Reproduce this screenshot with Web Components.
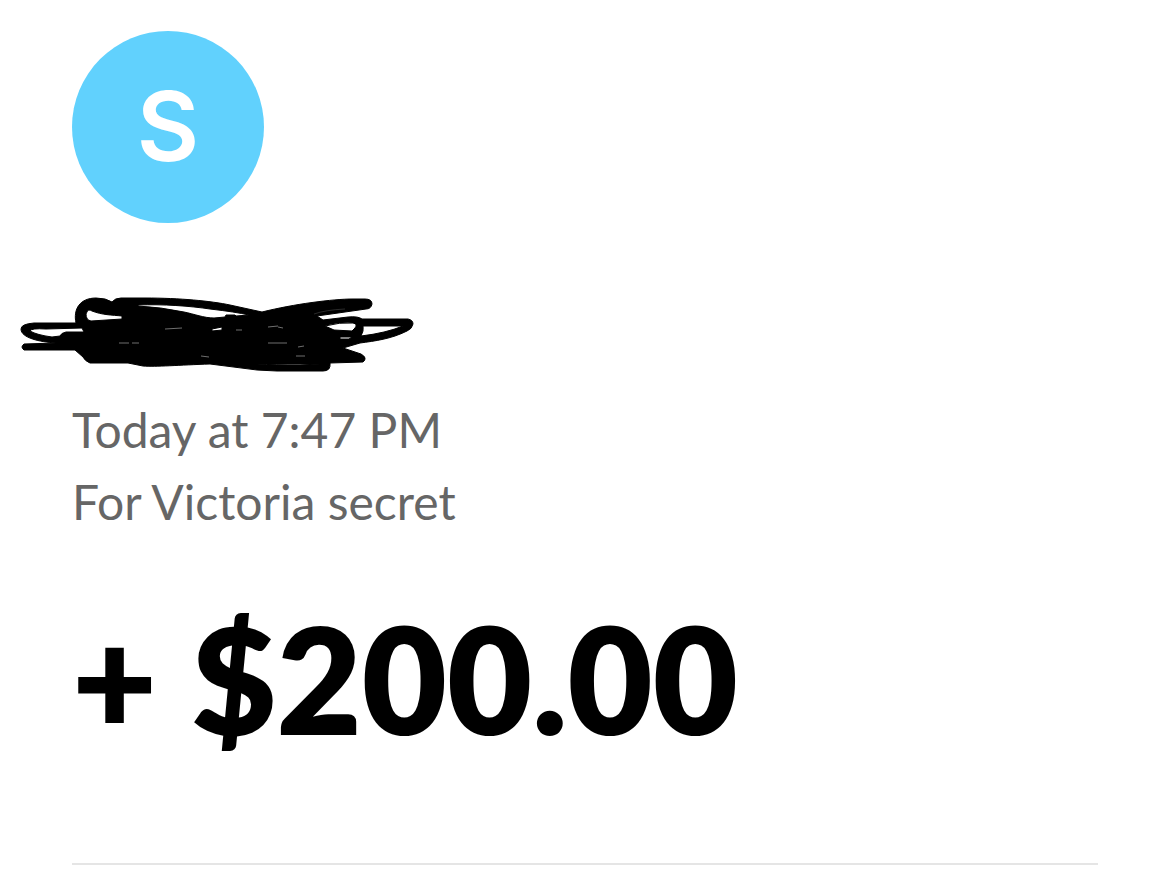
<!DOCTYPE html>
<html lang="en">
<head>
<meta charset="utf-8">
<meta name="viewport" content="width=device-width, initial-scale=1">
<title>Payment</title>
<style>
    body {
        margin: 0;
        background: #fff;
        color: #000;
        font-family: Lato, "Liberation Sans", Arial, sans-serif;
    }
</style>
</head>
<body>
<payment-receipt>
    <user-avatar slot="avatar">S</user-avatar>
    <hidden-name slot="name"></hidden-name>
    <span slot="time">Today at 7:47 PM</span>
    <span slot="note">For Victoria secret</span>
    <payment-amount slot="amount">+ $200.00</payment-amount>
</payment-receipt>

<script>
(function () {
    function define(name, html) {
        const tmpl = document.createElement('template');
        tmpl.innerHTML = html;

        customElements.define(name, class extends HTMLElement {
            constructor() {
                super();
                this.attachShadow({mode: 'open'});
                this.shadowRoot.appendChild(tmpl.content.cloneNode(true));
            }
        });
    }

    define('user-avatar', `
        <style>
            :host {
                display: flex;
                align-items: center;
                justify-content: center;
                box-sizing: border-box;
                width: 192px;
                height: 192px;
                padding-bottom: 2px;
                border-radius: 50%;
                background: #61d1fd;
                color: #fff;
                font: 600 96px/1 Inter, sans-serif;
            }
        </style>
        <slot></slot>
    `);

    // pen marks drawn over the sender's name
    define('hidden-name', `
        <style>
            :host {
                display: block;
                margin-left: -52px;
            }
            svg {
                display: block;
                width: 396px;
                height: 80px;
            }
        </style>
        <svg viewBox="20 295 396 80" aria-hidden="true">
            <path fill-rule="evenodd" stroke="#000" stroke-width="1" stroke-linejoin="round" d="
                M76 323 C73 309 80 298 96 298 Q106 298 112 302 Q115 298 121 298
                L145 298 C180 298 211 301 230 305 L262 312
                C294 304 333 299 353 299 L365 299 Q372 299 372 304 Q371 309 366 309
                L317 316 L323 320 L348 317 Q358 316 362 319 L408 319
                Q413 320 413 324 Q412 329 407 331 C391 339 375 341 360 343 L343 348
                L361 354 Q368 358 363 362 L330 363 Q331 371 323 371 L277 371
                L257 370 L210 364 C180 365 155 367 143 366 L128 363 L90 363
                Q85 361 83 357 L75 350 L24 350 Q20 347 24 344
                L56 343 C40 342 21 338 21 329 Q21 324 34 323 Z
                M30 331 Q31 328 46 329 L82 328 L84 332 L66 332 Q61 333 60 336
                L52 337 Q37 335 30 331 Z
                M86 314 Q88 308 92 311 C102 315 112 315 122 316 L122 319 L91 321 Q86 320 86 314 Z
                M138 305 C163 304 190 306 210 309 Q236 312 249 315 L236 316 L235 315 L226 315 L225 317
                L214 318 C204 318 194 314 184 312 Q160 307 138 306 Z
                M325 326 Q340 322 353 323 Q358 324 355 328 L352 331 L334 330 Z
                M340 337 L352 337 L349 339 L340 339 Z
                M363 326 L403 326 Q386 333 361 336 Q364 331 363 326 Z
                M212 329 L222 327 L222 330 L212 331 Z
                M257 364 L320 364 L300 365 Q275 365 257 364 Z"/>
            <g fill="none" stroke="#bbb" stroke-width="0.6">
                <path d="M165 329 L182 328 M236 330 L242 330 M268 327 L278 326 M278 327 L283 328"/>
                <path d="M119 343 L129 343 M132 343 L139 343 M268 343 L287 343 M298 347 L304 346"/>
                <path d="M201 356 L209 357 M296 356 L305 356"/>
            </g>
            <path d="M314 314 Q325 310 345 309" fill="none" stroke="#555" stroke-width="0.5"/>
        </svg>
    `);

    define('payment-amount', `
        <style>
            :host {
                display: block;
                font-size: 147px;
                font-weight: 800;
                line-height: 176px;
                white-space: nowrap;
            }
        </style>
        <slot></slot>
    `);

    define('payment-receipt', `
        <style>
            :host {
                display: block;
                padding: 31px 72px 0;
            }
            .name {
                margin-top: 72px;
            }
            .details {
                margin-top: 19px;
                color: #666;
                font-size: 48px;
                line-height: 72px;
            }
            .details ::slotted(span) {
                display: block;
            }
            .amount {
                margin-top: 52px;
            }
            hr {
                margin: 97px 0 0;
                border: 0;
                border-top: 2px solid #e5e5e5;
            }
        </style>
        <slot name="avatar"></slot>
        <div class="name"><slot name="name"></slot></div>
        <div class="details">
            <slot name="time"></slot>
            <slot name="note"></slot>
        </div>
        <div class="amount"><slot name="amount"></slot></div>
        <hr>
    `);
})();
</script>
</body>
</html>
